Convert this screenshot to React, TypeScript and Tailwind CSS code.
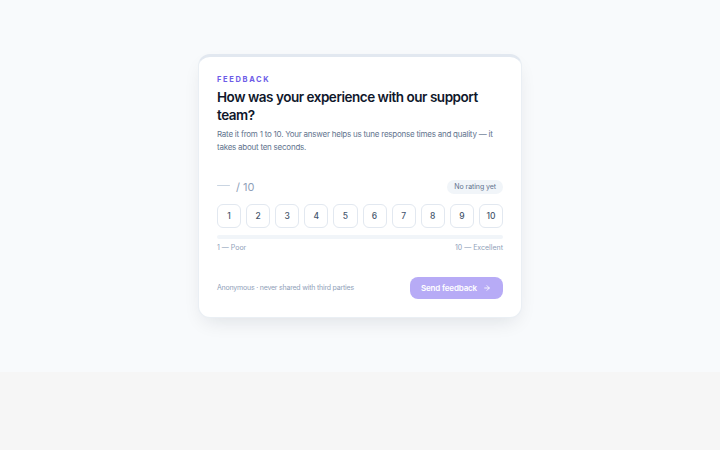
import { ArrowRight } from "lucide-react";

const scores = [1, 2, 3, 4, 5, 6, 7, 8, 9, 10];

export default function App() {
  return (
    <div
      className="h-screen bg-[#f6f6f6]"
      style={{ fontFamily: "Inter, 'Noto Sans', sans-serif" }}
    >
      <section className="flex justify-center bg-[#f8fafc] py-[54px]">
        <div className="w-[324px] rounded-xl border border-slate-200/70 border-t-[3px] border-t-slate-200 bg-white px-[18px] pb-[18px] pt-[18px] shadow-[0_8px_20px_-6px_rgba(15,23,42,0.12)]">
          <p className="text-[7.5px] font-bold uppercase leading-[10px] tracking-[0.22em] text-[#6d5ce7]">
            Feedback
          </p>
          <h1 className="mt-[3px] whitespace-nowrap text-[13.5px] font-semibold leading-[18px] tracking-[-0.035em] text-slate-900">
            How was your experience with our support
            <br />
            team?
          </h1>
          <p className="mt-[4px] whitespace-nowrap text-[8px] leading-[13px] tracking-[-0.03em] text-slate-500">
            Rate it from 1 to 10. Your answer helps us tune response times and quality — it
            <br />
            takes about ten seconds.
          </p>

          <div className="mt-[26px] flex h-[14px] items-center justify-between">
            <div className="flex items-center gap-[6px]">
              <span className="mb-[3px] h-[1.5px] w-[13px] rounded bg-slate-300" />
              <span className="text-[11px] text-slate-400">/ 10</span>
            </div>
            <span className="rounded-full bg-slate-100 px-[7px] py-[2px] text-[7px] leading-[10px] tracking-[-0.01em] text-slate-500">
              No rating yet
            </span>
          </div>

          <div className="mt-[10px] grid grid-cols-10 gap-[5px]">
            {scores.map((n) => (
              <button
                key={n}
                className="flex h-[24px] items-center justify-center rounded-md border border-slate-200 bg-white text-[8.5px] font-medium text-slate-600"
              >
                {n}
              </button>
            ))}
          </div>

          <div className="mt-[7px] h-[4px] w-full rounded-full bg-slate-100" />

          <div className="mt-[4px] flex justify-between text-[7px] leading-[10px] text-slate-400">
            <span>1 — Poor</span>
            <span>10 — Excellent</span>
          </div>

          <div className="mt-[24px] flex items-center justify-between">
            <span className="text-[7px] tracking-[-0.03em] text-slate-400">
              Anonymous · never shared with third parties
            </span>
            <button className="flex h-[22px] items-center gap-[6px] rounded-lg bg-[#b7abf6] pl-[11px] pr-[12px] text-[8px] font-semibold tracking-[-0.02em] text-white">
              Send feedback
              <ArrowRight size={8} strokeWidth={2.5} />
            </button>
          </div>
        </div>
      </section>
    </div>
  );
}
